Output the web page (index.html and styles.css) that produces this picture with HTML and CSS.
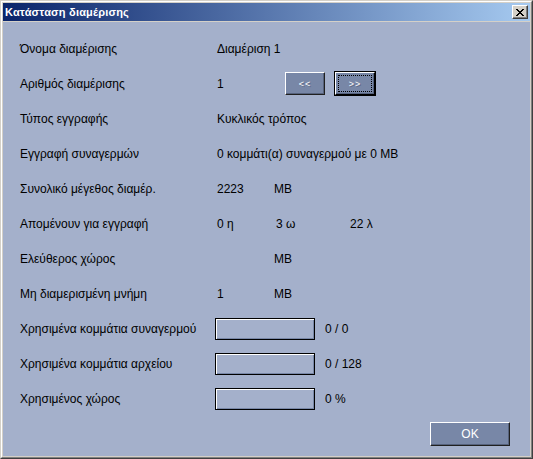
FILE: index.html
```html
<!DOCTYPE html>
<html lang="el">
<head>
<meta charset="utf-8">
<title>Κατάσταση διαμέρισης</title>
<link rel="stylesheet" href="styles.css">
</head>
<body>
<div class="window">
  <div class="frame">
    <div class="titlebar">
      <span class="title">Κατάσταση διαμέρισης</span>
      <button class="close" type="button" aria-label="Κλείσιμο">
        <svg width="8" height="7" viewBox="0 0 8 7"><path d="M0 0h2v1h1v1h2V1h1V0h2v1H7v1H6v1H5v1h1v1h1v1h1v1H6V6H5V5H3v1H2v1H0V6h1V5h1V4h1V3H2V2H1V1H0z" fill="#000"/></svg>
      </button>
    </div>
    <div class="client">
      <div class="rows">
        <div class="row"><span class="label">Όνομα διαμέρισης</span><span>Διαμέριση 1</span></div>
        <div class="row"><span class="label">Αριθμός διαμέρισης</span><span class="v68">1</span><button class="btn nav" type="button">&lt;&lt;</button><button class="btn nav focus" type="button"><span class="ring">&gt;&gt;</span></button></div>
        <div class="row"><span class="label">Τύπος εγγραφής</span><span>Κυκλικός τρόπος</span></div>
        <div class="row"><span class="label">Εγγραφή συναγερμών</span><span>0 κομμάτι(α) συναγερμού με 0 MB</span></div>
        <div class="row"><span class="label">Συνολικό μέγεθος διαμέρ.</span><span class="v57">2223</span><span>MB</span></div>
        <div class="row"><span class="label">Απομένουν για εγγραφή</span><span class="v59">0 η</span><span class="v74">3 ω</span><span>22 λ</span></div>
        <div class="row"><span class="label">Ελεύθερος χώρος</span><span class="v57"></span><span>MB</span></div>
        <div class="row"><span class="label">Μη διαμερισμένη μνήμη</span><span class="v57">1</span><span>MB</span></div>
        <div class="row"><span class="label lbar">Χρησιμένα κομμάτια συναγερμού</span><span class="bar"></span><span>0 / 0</span></div>
        <div class="row"><span class="label lbar">Χρησιμένα κομμάτια αρχείου</span><span class="bar"></span><span>0 / 128</span></div>
        <div class="row"><span class="label lbar">Χρησιμένος χώρος</span><span class="bar"></span><span>0 %</span></div>
      </div>
      <div class="footer">
        <button class="btn ok" type="button">OK</button>
      </div>
    </div>
  </div>
</div>
</body>
</html>
```
FILE: styles.css
```css
* { box-sizing: border-box; }
html, body { margin: 0; padding: 0; }
body {
  width: 533px;
  height: 459px;
  overflow: hidden;
  font-family: "Liberation Sans", Arial, sans-serif;
  font-size: 12px;
  color: #000;
  background: #d4d0c8;
}
.window {
  width: 533px;
  height: 459px;
  border: 1px solid;
  border-color: #d4d0c8 #404040 #404040 #d4d0c8;
}
.frame {
  height: 100%;
  border: 1px solid;
  border-color: #ffffff #808080 #808080 #ffffff;
  padding: 1px;
  background: #d4d0c8;
  display: flex;
  flex-direction: column;
}
.titlebar {
  height: 18px;
  flex: none;
  display: flex;
  align-items: center;
  justify-content: space-between;
  padding: 0 2px 0 2px;
  background: linear-gradient(to right, #0a246a, #a6caf0);
}
.title {
  color: #fff;
  font-weight: bold;
  font-size: 11px;
  letter-spacing: 0.2px;
}
.close {
  width: 16px;
  height: 14px;
  padding: 0;
  margin: 0;
  background: #d4d0c8;
  border: 1px solid;
  border-color: #ffffff #404040 #404040 #ffffff;
  box-shadow: inset -1px -1px 0 #808080;
  display: flex;
  align-items: center;
  justify-content: center;
}
.close svg { display: block; }
.client {
  flex: 1;
  margin-top: 1px;
  background: #a4b0cb;
  padding: 9px 17px 0 17px;
  display: flex;
  flex-direction: column;
}
.row {
  height: 35px;
  display: flex;
  align-items: center;
  white-space: nowrap;
}
.label { width: 197px; flex: none; }
.label.lbar { width: 195px; }
.v68 { width: 68px; flex: none; }
.v57 { width: 57px; flex: none; }
.v59 { width: 59px; flex: none; }
.v74 { width: 74px; flex: none; }
.btn {
  font-family: "Liberation Sans", Arial, sans-serif;
  color: #fff;
  background: #7887a7;
  border: 1px solid;
  border-color: #ffffff #202020 #202020 #ffffff;
  box-shadow: inset -1px -1px 0 #56627c;
  padding: 0;
  margin: 0;
}
.nav {
  width: 40px;
  height: 23px;
  font-size: 9px;
  letter-spacing: 1px;
  text-shadow: 1px 1px 0 #5a6682;
}
.nav + .nav { margin-left: 10px; }
.focus {
  border-color: #ffffff #000 #000 #ffffff;
  outline: 1px solid #000;
  outline-offset: 0;
  padding: 2px;
}
.ring {
  display: flex;
  align-items: center;
  justify-content: center;
  height: 100%;
  border: 1px dotted #000;
}
.bar {
  width: 100px;
  height: 22px;
  flex: none;
  margin-right: 10px;
  border: 1px solid #000;
  background: #a4b0cb;
  box-shadow: inset 1px 1px 0 #ffffff, inset -1px -1px 0 #7887a7;
}
.footer {
  display: flex;
  justify-content: flex-end;
  padding-top: 6px;
  padding-right: 3px;
}
.ok {
  width: 80px;
  height: 24px;
  font-size: 12px;
}
```
